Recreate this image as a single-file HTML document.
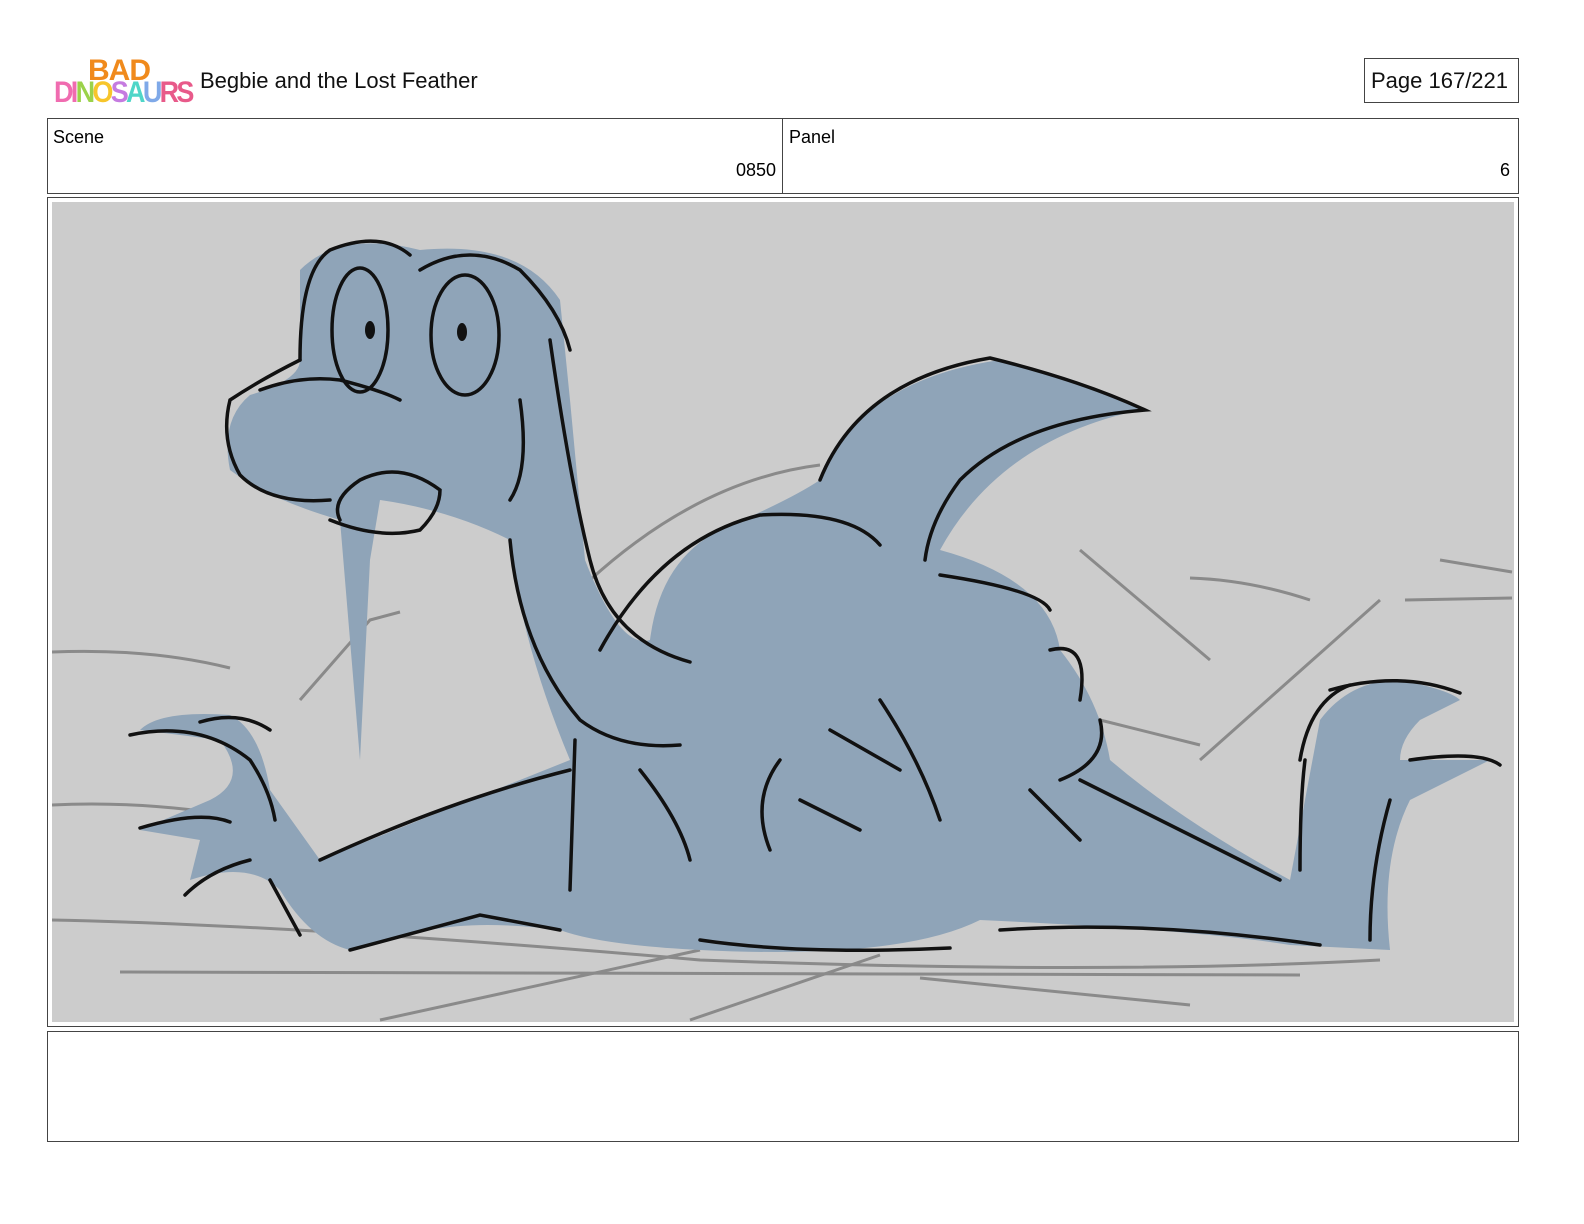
<!DOCTYPE html>
<html><head><meta charset="utf-8"><style>
body{margin:0;width:1584px;height:1224px;background:#fff;font-family:"Liberation Sans","DejaVu Sans",sans-serif;position:relative;overflow:hidden}
.a{position:absolute;box-sizing:border-box}
</style></head><body>
<div class="a" style="left:54px;top:54px;width:130px;height:58px">
<div class="a" style="left:34px;top:0;font:bold 30px 'Liberation Sans',sans-serif;color:#f08a1c;letter-spacing:-1px">BAD</div>
<div class="a" style="left:0;top:22px;font:bold 30px 'Liberation Sans',sans-serif;letter-spacing:-3px;transform:scaleX(.9);transform-origin:left"><span style="color:#f06cb0">DI</span><span style="color:#9bd24a">N</span><span style="color:#f7c52b">O</span><span style="color:#c57be0">S</span><span style="color:#4fd6c8">A</span><span style="color:#7fa9e8">U</span><span style="color:#e85a8a">RS</span></div>
</div>
<div class="a" style="left:200px;top:68px;font-size:22px;color:#111">Begbie and the Lost Feather</div>
<div class="a" style="left:1364px;top:58px;width:155px;height:45px;border:1px solid #444;font-size:22px;padding:9px 0 0 6px;color:#111">Page 167/221</div>
<div class="a" style="left:47px;top:118px;width:1472px;height:76px;border:1px solid #444"></div>
<div class="a" style="left:782px;top:118px;width:1px;height:76px;background:#444"></div>
<div class="a" style="left:53px;top:127px;font-size:18px">Scene</div>
<div class="a" style="left:736px;top:160px;font-size:18px">0850</div>
<div class="a" style="left:789px;top:127px;font-size:18px">Panel</div>
<div class="a" style="left:1500px;top:160px;font-size:18px">6</div>
<div class="a" style="left:47px;top:197px;width:1472px;height:830px;border:1px solid #444"></div>
<svg class="a" style="left:52px;top:202px" width="1462" height="820" viewBox="52 202 1462 820">
<rect x="52" y="202" width="1462" height="820" fill="#cccccc"/>
<g fill="none" stroke="#8a8a8a" stroke-width="3">
<path d="M52 652 Q150 648 230 668"/><path d="M52 805 Q150 800 260 820"/><path d="M52 920 Q300 925 700 960 Q1100 975 1380 960"/>
<path d="M120 972 L1300 975"/><path d="M380 1020 L700 950"/><path d="M690 1020 L880 955"/><path d="M920 978 L1190 1005"/>
<path d="M1190 578 Q1250 580 1310 600"/><path d="M1405 600 L1512 598"/><path d="M1440 560 L1512 572"/><path d="M1200 760 L1380 600"/><path d="M1080 550 L1210 660"/><path d="M1100 720 L1200 745"/>
<path d="M590 580 Q700 480 820 465"/><path d="M300 700 L370 620 L400 612"/>
</g>
<g fill="#8fa4b8">
<path d="M300 270 Q340 230 420 250 Q520 240 560 300 L570 400 L585 560 Q620 650 650 640 Q660 560 720 530 Q790 500 820 480 Q860 380 1000 360 Q1090 380 1140 410 Q1000 440 940 550 Q1050 580 1060 650 Q1100 700 1110 760 Q1180 820 1290 880 L1320 720 Q1350 680 1400 680 Q1450 690 1460 700 L1420 720 Q1400 740 1400 760 L1490 760 L1410 800 Q1380 860 1390 950 L1290 945 Q1200 930 980 920 Q900 960 700 950 Q600 945 560 930 Q480 920 430 930 L350 950 Q310 940 280 890 Q250 860 190 880 L200 840 L140 830 L210 800 Q250 780 220 740 L140 730 Q160 710 230 715 Q260 730 270 790 L320 860 Q470 800 570 760 Q520 640 510 540 Q450 510 380 500 L370 560 L360 760 L340 520 Q270 500 230 470 Q220 420 250 395 Q300 380 300 360 Z"/>
</g>
<g fill="none" stroke="#111" stroke-width="3.5" stroke-linecap="round">
<path d="M300 360 Q260 380 230 400 Q220 440 240 475 Q270 505 330 500"/>
<path d="M260 390 Q300 375 340 380 Q380 390 400 400"/>
<path d="M330 520 Q380 540 420 530 Q440 510 440 490 Q400 460 360 480 Q330 500 340 520"/>
<path d="M300 360 Q300 270 330 250 Q380 230 410 255"/><path d="M420 270 Q470 240 520 270 Q560 310 570 350"/>
<ellipse cx="360" cy="330" rx="28" ry="62"/><ellipse cx="465" cy="335" rx="34" ry="60"/>
<path d="M520 400 Q530 470 510 500"/><path d="M550 340 Q570 480 590 560 Q610 640 690 662"/>
<path d="M510 540 Q520 650 580 720 Q620 750 680 745"/>
<path d="M600 650 Q660 540 760 515 Q850 510 880 545"/>
<path d="M820 480 Q860 380 990 358 Q1080 380 1145 410 Q1020 420 960 480 Q930 520 925 560"/>
<path d="M940 575 Q1040 590 1050 610"/><path d="M1050 650 Q1090 640 1080 700"/><path d="M1100 720 Q1110 760 1060 780"/>
<path d="M1080 780 Q1200 840 1280 880"/><path d="M1330 690 Q1400 670 1460 693"/><path d="M1300 760 Q1310 700 1350 685"/>
<path d="M1410 760 Q1480 750 1500 765"/><path d="M1300 870 Q1300 800 1305 760"/><path d="M1390 800 Q1370 870 1370 940"/>
<path d="M1000 930 Q1150 920 1320 945"/><path d="M700 940 Q800 955 950 948"/><path d="M560 930 L480 915 L350 950"/>
<path d="M320 860 Q450 800 570 770"/><path d="M270 880 L300 935"/><path d="M130 735 Q200 720 250 760 Q270 790 275 820"/>
<path d="M140 828 Q200 810 230 822"/><path d="M185 895 Q210 870 250 860"/><path d="M270 730 Q240 710 200 722"/>
<path d="M575 740 L570 890"/><path d="M640 770 Q680 820 690 860"/><path d="M780 760 Q750 800 770 850"/><path d="M800 800 L860 830"/><path d="M830 730 L900 770"/>
<path d="M880 700 Q920 760 940 820"/><path d="M1030 790 L1080 840"/>
</g>
<g fill="#111"><ellipse cx="370" cy="330" rx="5" ry="9"/><ellipse cx="462" cy="332" rx="5" ry="9"/></g>
</svg>
<div class="a" style="left:47px;top:1031px;width:1472px;height:111px;border:1px solid #444"></div>
</body></html>
